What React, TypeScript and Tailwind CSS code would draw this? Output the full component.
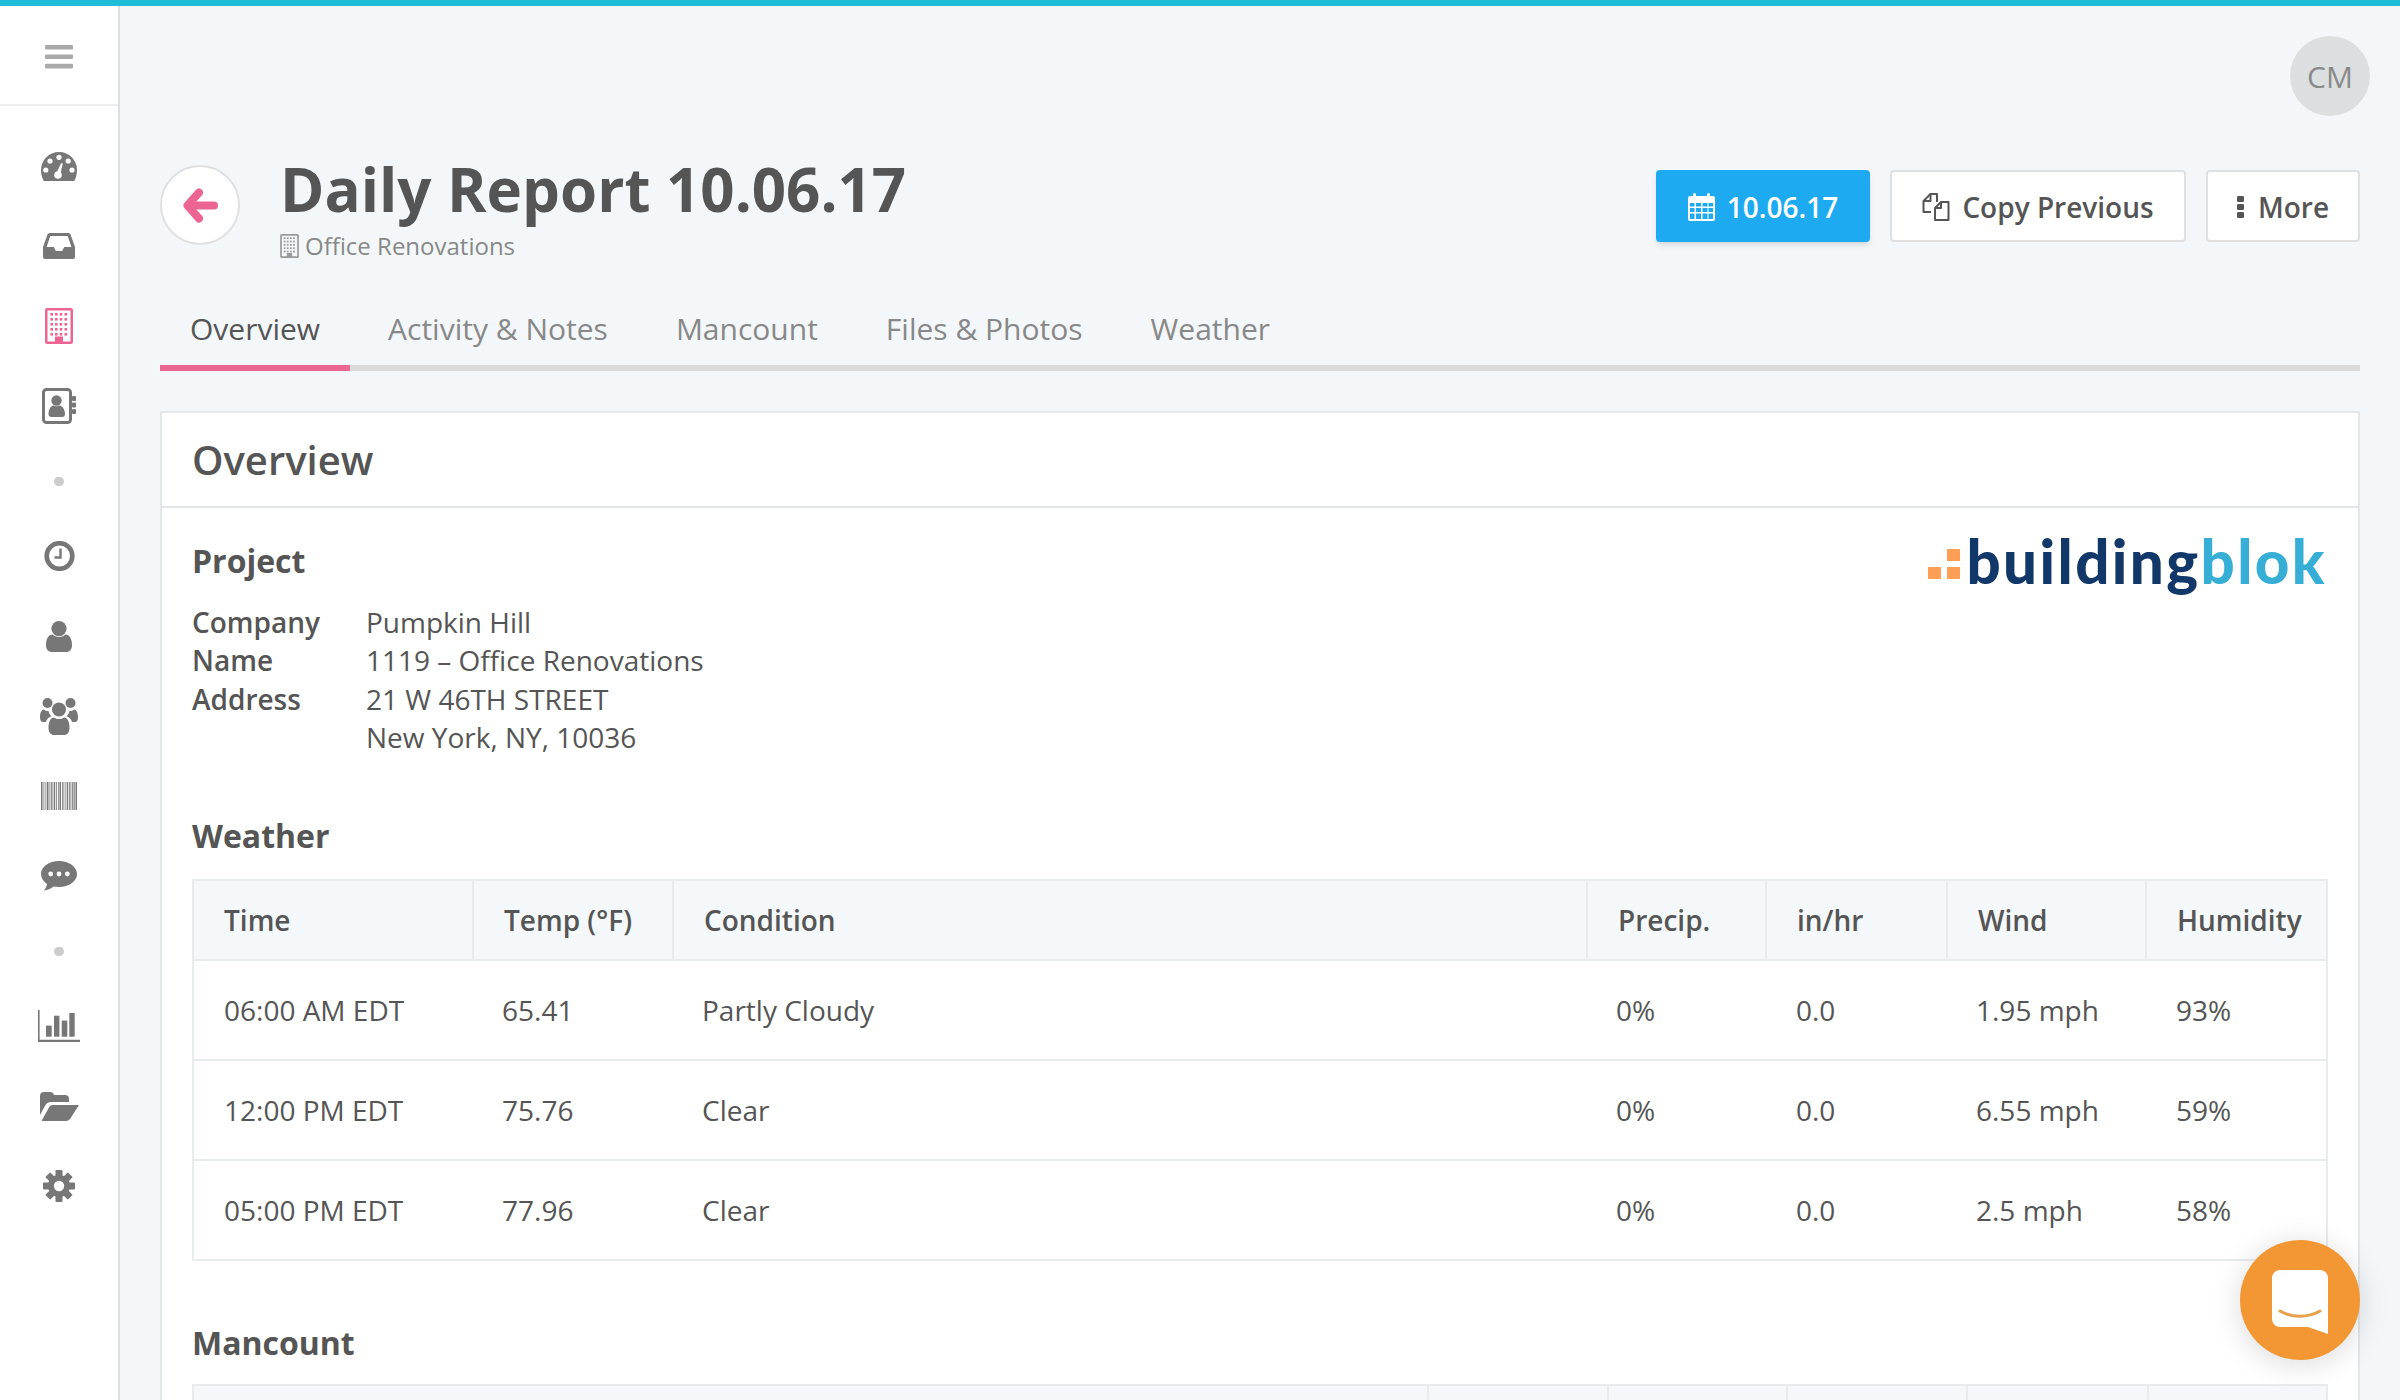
const weather = [
  ["06:00 AM EDT", "65.41", "Partly Cloudy", "0%", "0.0", "1.95 mph", "93%"],
  ["12:00 PM EDT", "75.76", "Clear", "0%", "0.0", "6.55 mph", "59%"],
  ["05:00 PM EDT", "77.96", "Clear", "0%", "0.0", "2.5 mph", "58%"],
];

const barcodeBars = [
  [0, 1.5], [2.5, 0.8], [4.5, 0.8], [6, 1.5], [8.5, 0.8], [10, 0.8], [11.5, 0.8], [13, 1.2], [15, 0.8], [17, 0.8], [18.5, 1.5], [21, 0.8], [22.5, 0.8], [24.5, 0.8], [26, 1.2], [28, 0.8], [29.5, 0.8], [31, 0.8], [32.5, 1.2], [34.5, 1.5],
];

function Building({ width, height, color }: { width: number; height: number; color: string }) {
  const cols = [6.7, 11.3, 16, 20.8];
  const rows = [6.3, 11.3, 16.3, 21.3, 26.3];
  return (
    <svg width={width} height={height} viewBox="0 0 28 36" fill={color}>
      <rect x="1.25" y="1.25" width="25.5" height="33.5" rx="1" fill="none" stroke={color} strokeWidth="2.5" />
      {rows.map((y) => cols.map((x) => <rect key={`${x}-${y}`} x={x - 1.3} y={y - 1.3} width="2.6" height="2.6" />))}
      <rect x="10" y="28.5" width="8" height="6.5" />
    </svg>
  );
}

function Tachometer() {
  return (
    <svg width="36" height="29" viewBox="0 0 36 29">
      <path d="M18 0C8 0 0 8 0 18c0 4 1 7.5 2.5 10.5.3.4.7.5 1.2.5h28.6c.5 0 .9-.1 1.2-.5C35 25.5 36 22 36 18 36 8 28 0 18 0z" fill="#777" />
      <g fill="#fff">
        <circle cx="18" cy="5.3" r="2.6" />
        <circle cx="9" cy="9" r="2.6" />
        <circle cx="27.2" cy="9" r="2.6" />
        <circle cx="4.8" cy="18" r="2.6" />
        <circle cx="31" cy="18" r="2.6" />
        <circle cx="17" cy="23" r="3.8" />
        <path d="M15.2 21.5 20.2 11l1.6.5-2.6 11.2z" />
      </g>
    </svg>
  );
}

function Inbox() {
  return (
    <svg width="32" height="26" viewBox="0 0 32 26" fill="#777">
      <path fillRule="evenodd" d="M7 0h18c1 0 2 .5 2.5 1.5L32 14v10a2 2 0 0 1-2 2H2a2 2 0 0 1-2-2V14L4.5 1.5C5 .5 6 0 7 0zM7.3 3 3.6 14h7.2l2 4h6.4l2-4h7.2L24.7 3z" />
    </svg>
  );
}

function AddressBook() {
  return (
    <svg width="34" height="36" viewBox="0 0 34 36" fill="#777">
      <rect x="1.5" y="1.5" width="27" height="33" rx="3" fill="none" stroke="#777" strokeWidth="3" />
      <rect x="30" y="8" width="4" height="5" rx="1" />
      <rect x="30" y="14.5" width="4" height="5" rx="1" />
      <rect x="30" y="21" width="4" height="5" rx="1" />
      <circle cx="14.5" cy="12.5" r="5.2" />
      <path d="M6.5 26c0-5 2.5-8 5-8.5 1.5 1 4.5 1 6 0 2.5.5 5.5 3.5 5.5 8.5 0 2-1 3-3 3H9.5c-2 0-3-1-3-3z" />
    </svg>
  );
}

function Clock() {
  return (
    <svg width="31" height="30" viewBox="0 0 31 30" fill="none" stroke="#777">
      <circle cx="15.5" cy="15" r="12.8" strokeWidth="4.6" />
      <path d="M16.5 7.5v9h-6" strokeWidth="2.4" />
    </svg>
  );
}

function User() {
  return (
    <svg width="26" height="31" viewBox="0 0 26 31" fill="#777">
      <circle cx="13" cy="7.6" r="7.6" />
      <path d="M0 24c0-6 2.5-10.500 6.500-10.500C8 15 10.500 16 13 16s5-1 6.500-2.500C23.500 13.500 26 18 26 24c0 4-2 7-5.500 7h-15C2 31 0 28 0 24z" />
    </svg>
  );
}

function Users() {
  return (
    <svg width="38" height="37" viewBox="0 0 38 37" fill="#777">
      <circle cx="7.5" cy="5" r="5" />
      <circle cx="30.5" cy="5" r="5" />
      <path d="M0 19c0-4 1.5-7.5 4-7.5 1 1 2.5 1.5 4.5 1.5.5 2 1.5 4 3 5.2C8.5 19 6.5 21.5 6 24H3c-2 0-3-1.5-3-5z" />
      <path d="M38 19c0-4-1.5-7.5-4-7.500-1 1-2.500 1.500-4.500 1.500-.5 2-1.500 4-3 5.200 3 .8 5 3.300 5.500 5.800h3c2 0 3-1.500 3-5z" />
      <circle cx="19" cy="11.5" r="7" />
      <path d="M8.5 30c0-6 2-10.500 5.500-10.500 1.500 1 3 1.500 5 1.500s3.500-.5 5-1.500c3.500 0 5.500 4.500 5.500 10.500 0 4.500-2.500 7-5.500 7H14c-3 0-5.500-2.500-5.500-7z" />
    </svg>
  );
}

function Barcode() {
  return (
    <svg width="36" height="28" viewBox="0 0 36 28" fill="#777">
      {barcodeBars.map(([x, w]) => <rect key={x} x={x} y="0" width={w} height="28" />)}
    </svg>
  );
}

function Commenting() {
  return (
    <svg width="36" height="30" viewBox="0 0 36 30">
      <path d="M18 0C8 0 0 5.8 0 13c0 4 2.5 7.5 6 10-.3 2.5-1.5 4.8-3 6.5 3.5-.3 7-2 9.5-4 1.8.3 3.6.5 5.5.5 10 0 18-5.8 18-13S28 0 18 0z" fill="#777" />
      <g fill="#fff">
        <circle cx="9.7" cy="13" r="2.4" />
        <circle cx="18" cy="13" r="2.4" />
        <circle cx="26.3" cy="13" r="2.4" />
      </g>
    </svg>
  );
}

function BarChart() {
  return (
    <svg width="42" height="32" viewBox="0 0 42 32" fill="#777">
      <path d="M0 0h1.6v29.8H42V32H0z" />
      <rect x="8" y="15.6" width="5.7" height="11.1" />
      <rect x="16" y="5.7" width="5.4" height="21" />
      <rect x="23.7" y="10.6" width="5.6" height="16.1" />
      <rect x="31.3" y="3" width="5.4" height="23.7" />
    </svg>
  );
}

function FolderOpen() {
  return (
    <svg width="39" height="29" viewBox="0 0 39 29" fill="#777">
      <path d="M0 23V4a4 4 0 0 1 4-4h6c2.2 0 3.5 1.2 4 3h11a4 4 0 0 1 4 4v3H11c-2.5 0-4.3 1-5.5 3z" />
      <path d="M1.5 29 9 15.500c1-1.700 2.200-2.500 4-2.500h26l-8 12.500c-1.200 2-3 3.500-5 3.500z" />
    </svg>
  );
}

function Cog() {
  return (
    <svg width="32" height="32" viewBox="0 0 32 32" fill="#777">
      {[0, 45, 90, 135].map((a) => (
        <rect key={a} x="12.5" y="0" width="7" height="32" rx="1" transform={`rotate(${a} 16 16)`} />
      ))}
      <circle cx="16" cy="16" r="11" />
      <circle cx="16" cy="16" r="5.2" fill="#fff" />
    </svg>
  );
}

function SideIcon({ children }: { children: React.ReactNode }) {
  return <div className="flex h-[80px] items-center justify-center">{children}</div>;
}

function Dot() {
  return (
    <div className="flex h-[70px] items-center justify-center">
      <div className="h-[9px] w-[10px] rounded-full bg-[#ccc]" />
    </div>
  );
}

function Sidebar() {
  return (
    <aside className="w-[120px] shrink-0 border-r-2 border-[#dcdfe0] bg-white">
      <div className="flex h-[100px] items-center justify-center border-b-2 border-[#eee]">
        <svg className="mt-[3px]" width="28" height="24" viewBox="0 0 28 24" fill="#aaa">
          <rect y="0" width="28" height="4.6" rx="1.2" />
          <rect y="9.4" width="28" height="4.6" rx="1.2" />
          <rect y="18.8" width="28" height="4.6" rx="1.2" />
        </svg>
      </div>
      <div className="pt-[20px]">
        <SideIcon><Tachometer /></SideIcon>
        <SideIcon><Inbox /></SideIcon>
        <SideIcon><Building width={28} height={36} color="#ec6592" /></SideIcon>
        <SideIcon><AddressBook /></SideIcon>
        <Dot />
        <SideIcon><Clock /></SideIcon>
        <SideIcon><User /></SideIcon>
        <SideIcon><Users /></SideIcon>
        <SideIcon><Barcode /></SideIcon>
        <SideIcon><Commenting /></SideIcon>
        <Dot />
        <SideIcon><BarChart /></SideIcon>
        <SideIcon><FolderOpen /></SideIcon>
        <SideIcon><Cog /></SideIcon>
      </div>
    </aside>
  );
}

export default function App() {
  return (
    <div className="relative flex h-[1400px] overflow-hidden border-t-[6px] border-[#1fbcd8] bg-[#f4f7f9] font-['Open_Sans',sans-serif] text-[#555]">
      <Sidebar />
      <main className="min-w-0 flex-1 px-[40px]">
        <div className="flex justify-end pt-[30px]">
          <div className="-mr-[10px] flex h-[80px] w-[80px] items-center justify-center rounded-full bg-[#dcdfe0] text-[30px] text-[#8a8a8a]">CM</div>
        </div>

        <div className="mt-[54px] flex items-start justify-between">
          <div className="flex">
            <button className="mt-[-5px] flex h-[80px] w-[80px] items-center justify-center rounded-full border-2 border-[#e0e0e0] bg-white">
              <svg width="35" height="35" viewBox="0 0 35 35" fill="none" stroke="#ec6592" strokeWidth="8" strokeLinejoin="round" strokeLinecap="round">
                <path d="M16 4.5 4.5 17.5 16 30.5" />
                <path d="M6 17.5h25" />
              </svg>
            </button>
            <div className="ml-[40px] mt-[-22px]">
              <h1 className="text-[60px] leading-[82px] font-bold">Daily Report 10.06.17</h1>
              <div className="mt-[1px] flex items-center gap-[6px] text-[24px] leading-[30px] text-[#888]">
                <Building width={19} height={24} color="#999" />
                Office Renovations
              </div>
            </div>
          </div>
          <div className="flex gap-[20px]">
            <button className="flex h-[72px] w-[214px] items-center justify-center gap-[12px] rounded bg-[#1eaaf1] pt-[1px] text-[28px] font-semibold text-white shadow-md">
              <svg width="27" height="28" viewBox="0 0 27 28" fill="#fff">
                <path fillRule="evenodd" d="M2 3h3V1.5a1.5 1.5 0 0 1 3 0V3h11V1.5a1.5 1.5 0 0 1 3 0V3h3a2 2 0 0 1 2 2v21a2 2 0 0 1-2 2H2a2 2 0 0 1-2-2V5a2 2 0 0 1 2-2zM2 10v3.5h4.5V10zm6 0v3.5h5V10zm6.5 0v3.5h5V10zm6 0v3.5H25V10zM2 15v4h4.5v-4zm6 0v4h5v-4zm6.5 0v4h5v-4zm6 0v4H25v-4zM2 20.5V26h4.5v-5.5zm6 0V26h5v-5.5zm6.5 0V26h5v-5.5zm6 0V26H25v-5.5z" />
              </svg>
              10.06.17
            </button>
            <button className="flex h-[72px] w-[296px] items-center justify-center gap-[12px] rounded border-2 border-[#e0e0e0] bg-white pt-[1px] text-[28px] font-semibold">
              <svg width="28" height="28" viewBox="0 0 28 28" fill="none" stroke="#555" strokeWidth="2" strokeLinejoin="round">
                <path d="M9 19H1.5V8L8.5 1H15v8" />
                <path d="M8.5 1v7h-7" />
                <path d="M19 9h7.5v18H13V15z" />
                <path d="M19 9v6h-6" />
              </svg>
              Copy Previous
            </button>
            <button className="flex h-[72px] w-[154px] items-center justify-center gap-[14px] rounded border-2 border-[#e0e0e0] bg-white pt-[1px] text-[28px] font-semibold">
              <svg width="7" height="22" viewBox="0 0 7 22" fill="#555">
                <rect width="7" height="6" rx="1.2" />
                <rect y="8" width="7" height="6" rx="1.2" />
                <rect y="16" width="7" height="6" rx="1.2" />
              </svg>
              More
            </button>
          </div>
        </div>

        <div className="mt-[45px] flex gap-[8px] border-b-[6px] border-[#dcdcdc] text-[30px] text-[#888]">
          <div className="-mb-[6px] border-b-[6px] border-[#ec6592] px-[30px] pb-[14px] text-[#555]">Overview</div>
          <div className="px-[30px]">Activity &amp; Notes</div>
          <div className="px-[30px]">Mancount</div>
          <div className="px-[30px]">Files &amp; Photos</div>
          <div className="px-[30px]">Weather</div>
        </div>

        <section className="mt-[40px] h-[1000px] border-2 border-[#e4e7ea] bg-white">
          <h2 className="flex h-[95px] items-center border-b-2 border-[#e4e7ea] px-[30px] text-[40px] font-semibold">Overview</h2>
          <div className="px-[30px]">
            <div className="flex items-start justify-between">
              <div>
                <h3 className="mt-[31px] text-[32px] leading-[44px] font-bold">Project</h3>
                <div className="mt-[20px] grid grid-cols-[174px_1fr] text-[28px] leading-[38.3px]">
                  <div className="font-semibold">Company</div><div>Pumpkin Hill</div>
                  <div className="font-semibold">Name</div><div>1119 – Office Renovations</div>
                  <div className="font-semibold">Address</div><div>21 W 46TH STREET</div>
                  <div /><div>New York, NY, 10036</div>
                </div>
              </div>
              <div className="mt-[18px] mr-[1px] flex items-end">
                <div className="mr-[6px] mb-[17px] grid grid-cols-2 gap-[6px]">
                  <div />
                  <div className="h-[12px] w-[13px] bg-[#ff9f55]" />
                  <div className="h-[12px] w-[13px] bg-[#ff9f55]" />
                  <div className="h-[12px] w-[13px] bg-[#ff9f55]" />
                </div>
                <div className="font-['Lato',sans-serif] text-[60px] leading-[70px] font-black tracking-[2.4px] text-[#12386a]">building<span className="text-[#36aed6]">blok</span></div>
              </div>
            </div>

            <h3 className="mt-[58px] text-[32px] leading-[44px] font-bold">Weather</h3>
            <div className="mt-[21px] border-2 border-b-0 border-[#e9eced]">
              <table className="w-full table-fixed border-collapse text-left text-[28px]">
                <colgroup>
                  <col className="w-[279px]" /><col className="w-[200px]" /><col className="w-[914px]" /><col className="w-[179px]" /><col className="w-[181px]" /><col className="w-[199px]" /><col className="w-[180px]" />
                </colgroup>
                <thead>
                  <tr className="h-[79px] border-b-2 border-[#e9eced] bg-[#f5f8fa]">
                    {["Time", "Temp (°F)", "Condition", "Precip.", "in/hr", "Wind", "Humidity"].map((h, i) => (
                      <th key={h} className={`${i > 0 ? "border-l-2 border-[#e9eced]" : ""} px-[30px] font-semibold`}>{h}</th>
                    ))}
                  </tr>
                </thead>
                <tbody>
                  {weather.map((row) => (
                    <tr key={row[0]} className="h-[100px] border-b-2 border-[#e9eced]">
                      {row.map((c, i) => (
                        <td key={i} className={i === 0 || i === 4 || i === 6 ? "pl-[30px]" : "pl-[29px]"}>{c}</td>
                      ))}
                    </tr>
                  ))}
                </tbody>
              </table>
            </div>

            <h3 className="mt-[60px] text-[32px] leading-[44px] font-bold">Mancount</h3>
            <div className="mt-[19px] grid h-[60px] grid-cols-[1fr_180px_179px_180px_181px_179px] border-2 border-[#e9eced] bg-[#f5f8fa]">
              <div />
              <div className="border-l-2 border-[#e9eced]" />
              <div className="border-l-2 border-[#e9eced]" />
              <div className="border-l-2 border-[#e9eced]" />
              <div className="border-l-2 border-[#e9eced]" />
              <div className="border-l-2 border-[#e9eced]" />
            </div>
          </div>
        </section>
      </main>

      <div className="absolute top-[1234px] left-[2240px] flex h-[120px] w-[120px] items-center justify-center rounded-full bg-[#f29733] shadow-[0_4px_30px_rgba(0,0,0,0.15)]">
        <svg className="mt-[4px]" width="56" height="64" viewBox="0 0 56 64">
          <path d="M8 0h40a8 8 0 0 1 8 8v56l-20-7H8a8 8 0 0 1-8-8V8a8 8 0 0 1 8-8z" fill="#fff" />
          <path d="M8 41c12 7 28 7 40 0" fill="none" stroke="#e8a04a" strokeWidth="3" strokeLinecap="round" />
        </svg>
      </div>
    </div>
  );
}
